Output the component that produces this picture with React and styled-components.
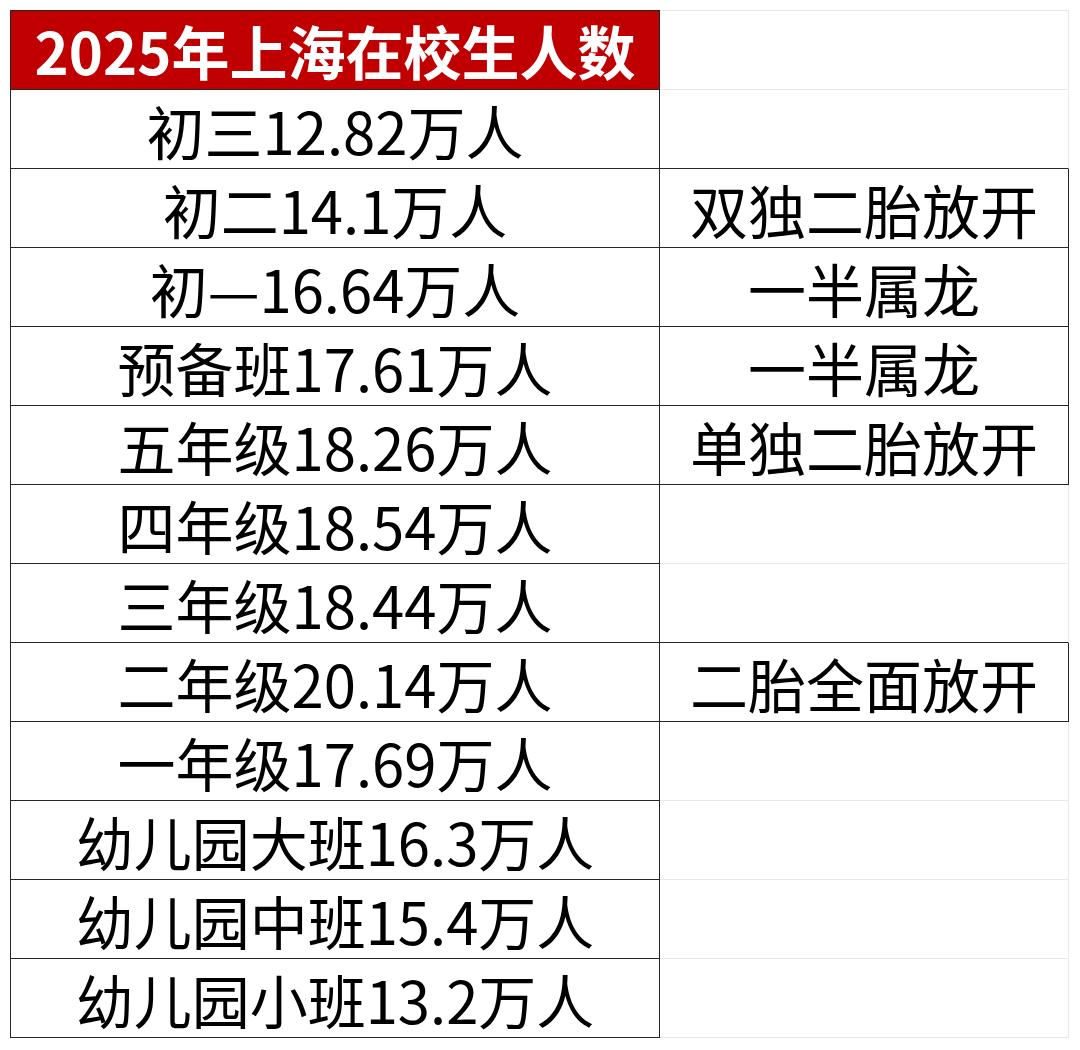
import React from 'react';
import styled, { createGlobalStyle } from 'styled-components';

const rows = [
  { label: '初三12.82万人', note: '' },
  { label: '初二14.1万人', note: '双独二胎放开' },
  { label: '初—16.64万人', note: '一半属龙' },
  { label: '预备班17.61万人', note: '一半属龙' },
  { label: '五年级18.26万人', note: '单独二胎放开' },
  { label: '四年级18.54万人', note: '' },
  { label: '三年级18.44万人', note: '' },
  { label: '二年级20.14万人', note: '二胎全面放开' },
  { label: '一年级17.69万人', note: '' },
  { label: '幼儿园大班16.3万人', note: '' },
  { label: '幼儿园中班15.4万人', note: '' },
  { label: '幼儿园小班13.2万人', note: '' },
];

const LINE = '#262626';
const GRID = '#e8e8e8';

export default function App() {
  return (
    <>
      <GlobalStyle />
      <Sheet>
        <Title>2025年上海在校生人数</Title>
        <Note $top $right={GRID} $bottom={GRID} />
        {rows.map((r, i) => {
          const boxed = r.note !== '';
          const nextBoxed = i + 1 < rows.length && rows[i + 1].note !== '';
          return (
            <React.Fragment key={r.label}>
              <Label>{r.label}</Label>
              <Note
                $right={boxed ? LINE : GRID}
                $bottom={boxed || nextBoxed ? LINE : GRID}
              >
                {r.note}
              </Note>
            </React.Fragment>
          );
        })}
      </Sheet>
    </>
  );
}

const GlobalStyle = createGlobalStyle`
  body {
    margin: 0;
    background: #fff;
    font-family: "Noto Sans CJK SC", "Noto Sans", sans-serif;
  }
`;

const Sheet = styled.div`
  display: grid;
  grid-template-columns: 650px 409px;
  grid-template-rows: 80px;
  grid-auto-rows: 79px;
  padding: 10px 0 0 10px;
`;

const Cell = styled.div`
  box-sizing: border-box;
  display: flex;
  align-items: center;
  justify-content: center;
  font-size: 58px;
  line-height: 1;
  color: #000;
  white-space: nowrap;
  padding-top: 1px;
`;

const Title = styled(Cell)`
  background: #c00000;
  color: #fff;
  font-weight: 700;
  border: 1px solid ${LINE};
  padding-top: 0;
`;

const Label = styled(Cell)`
  border-left: 1px solid ${LINE};
  border-right: 1px solid ${LINE};
  border-bottom: 1px solid ${LINE};
`;

const Note = styled(Cell)`
  border-right: 1px solid ${(p) => p.$right};
  border-bottom: 1px solid ${(p) => p.$bottom};
  ${(p) => (p.$top ? `border-top: 1px solid ${GRID};` : '')}
`;
